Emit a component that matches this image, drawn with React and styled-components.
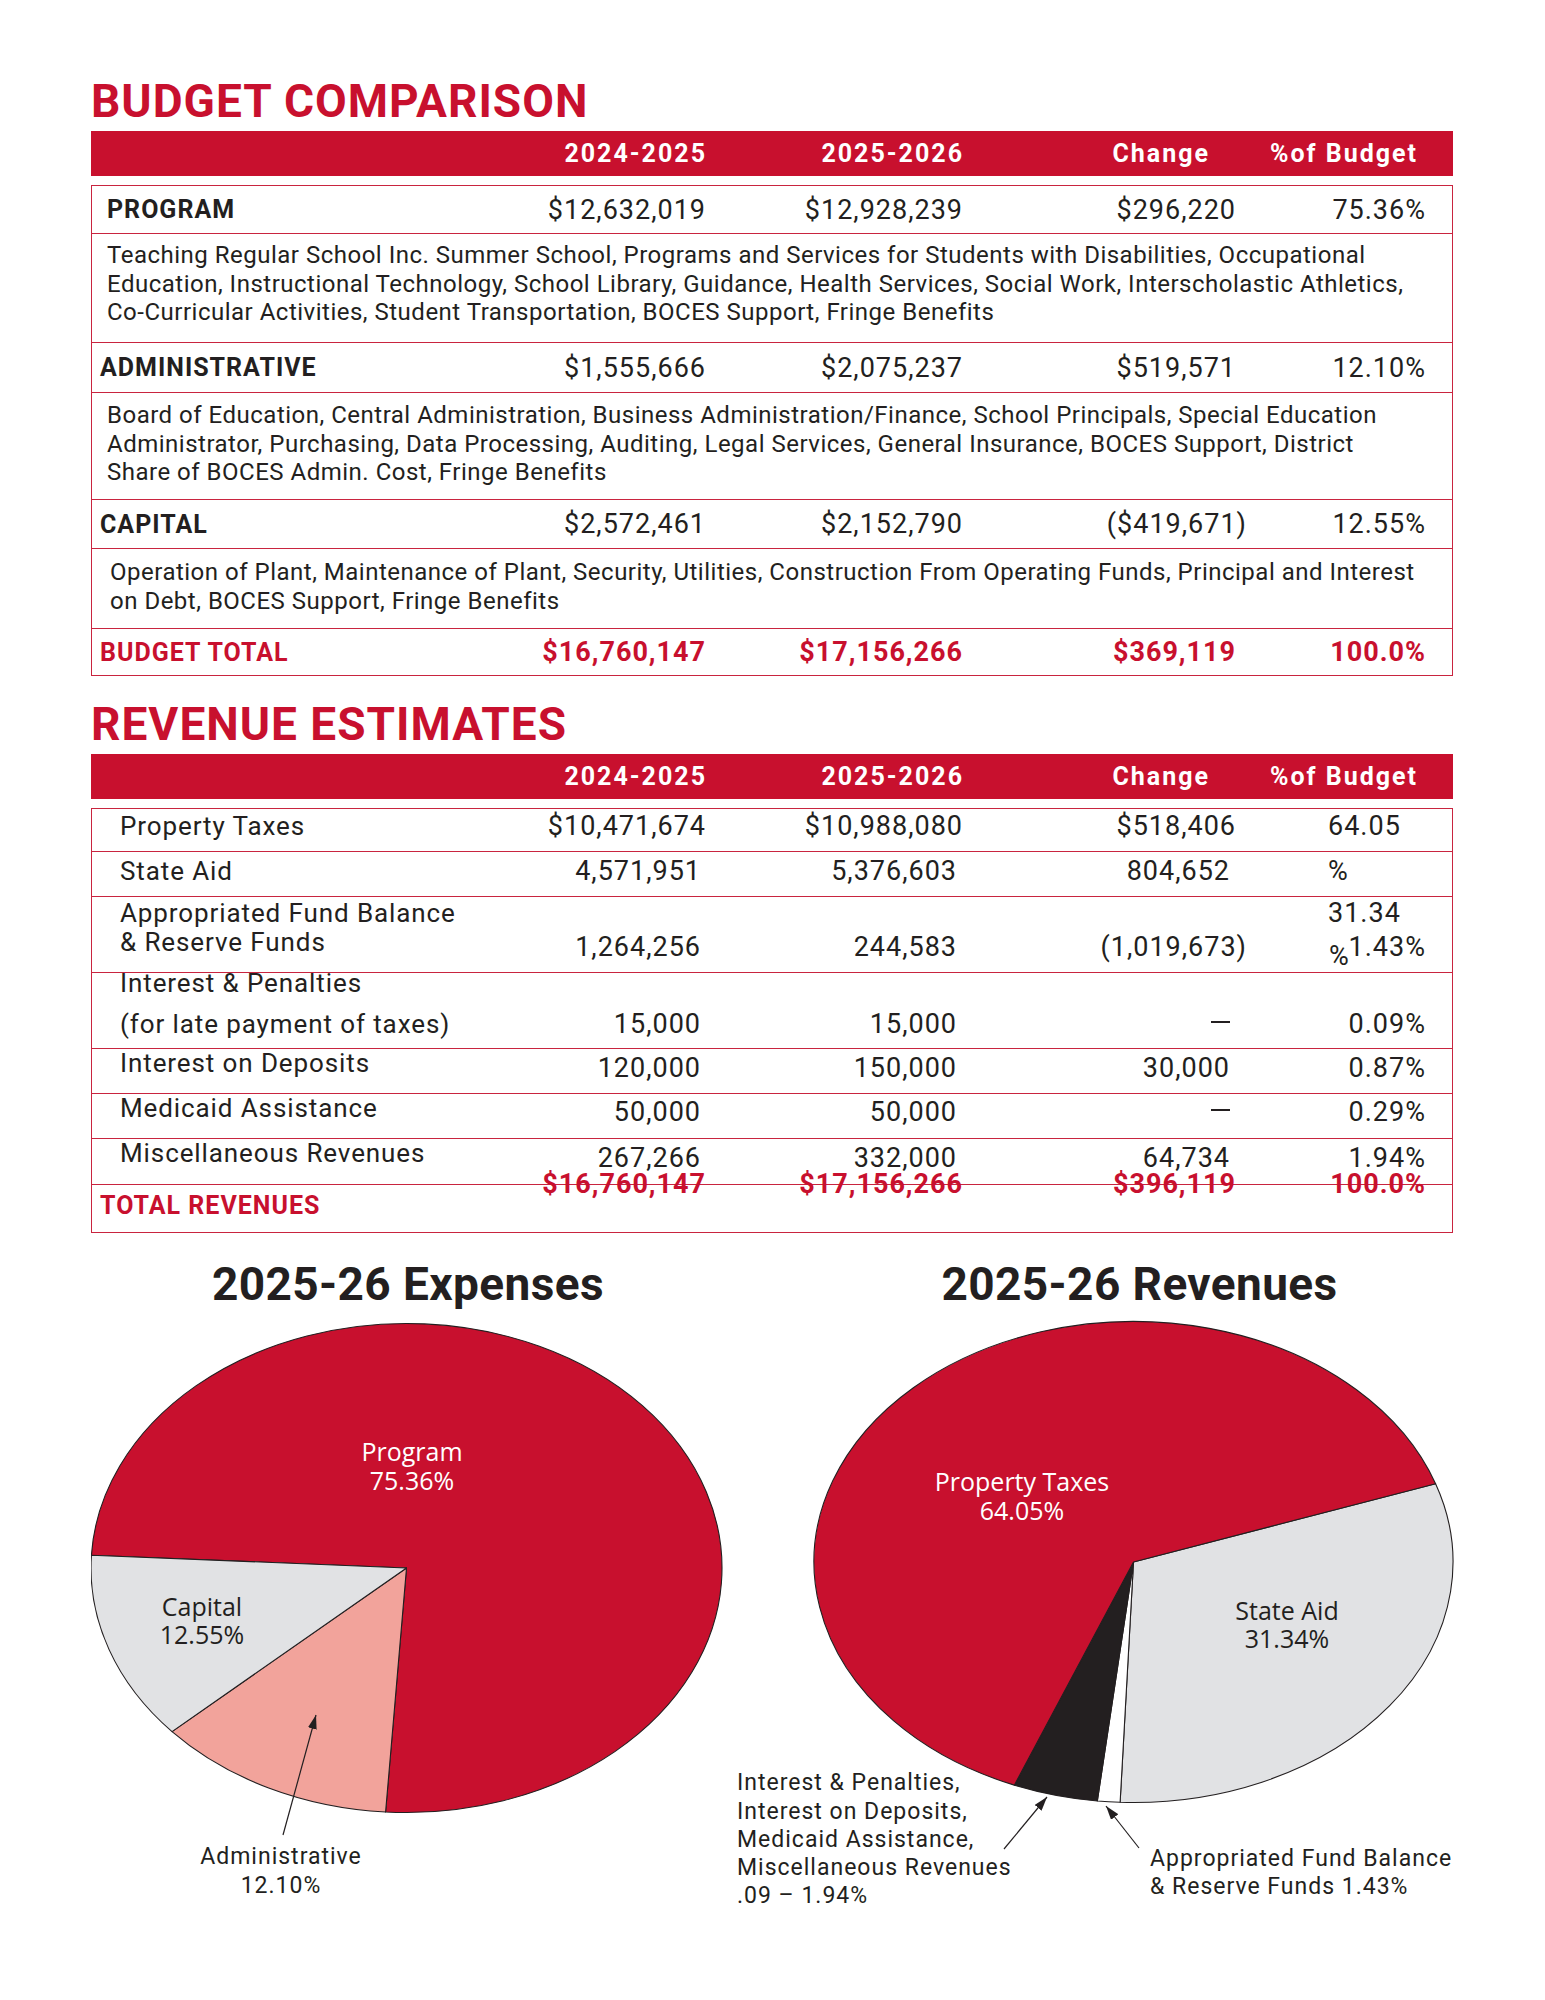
import React from 'react';
import styled, { createGlobalStyle } from 'styled-components';

const RED = '#c8102e';
const INK = '#231f20';
const LINE = '#c9243f';
const GREY = '#e1e2e4';
const SALMON = '#f2a39b';
const COLS = '1fr 200px 257px 273px 190px';

const GlobalStyle = createGlobalStyle`
  body {
    margin: 0;
    background: #fff;
    color: ${INK};
    font-family: Roboto, "Liberation Sans", sans-serif;
  }
`;

const Page = styled.div`
  width: 1362px;
  padding: 79px 0 0 91px;
`;

const SectionTitle = styled.h1`
  margin: ${p => p.$mt || 0}px 0 7px;
  font-size: 46px;
  line-height: 45px;
  font-weight: 700;
  color: ${RED};
  letter-spacing: 1px;
`;

const HeaderBar = styled.div`
  display: grid;
  grid-template-columns: ${COLS};
  align-items: center;
  height: 45px;
  padding-right: 26px;
  background: ${RED};
  color: #fff;
  font-size: 25px;
  font-weight: 700;
  letter-spacing: 2px;
`;

const HeadCell = styled.div`
  text-align: right;
  padding-right: ${p => p.$pr || 0}px;
`;

const Table = styled.div`
  margin-top: 9px;
  border: 1px solid ${LINE};
`;

const Row = styled.div`
  display: grid;
  grid-template-columns: ${COLS};
  align-items: center;
  box-sizing: border-box;
  height: ${p => p.$h}px;
  padding-right: 26px;
  border-bottom: ${p => (p.$last ? 'none' : `1px solid ${LINE}`)};
`;

const Label = styled.div`
  padding-left: ${p => p.$pl}px;
  font-size: 25px;
  font-weight: 700;
  letter-spacing: 1px;
  color: ${p => (p.$red ? RED : INK)};
`;

const Num = styled.div`
  text-align: right;
  font-size: 27px;
  letter-spacing: 1px;
  font-weight: ${p => (p.$total ? 700 : 400)};
  color: ${p => (p.$total ? RED : INK)};
`;

const Hang = styled.span`
  margin-right: -11px;
`;

const Dash = styled.span`
  display: inline-block;
  width: 19px;
  height: 2px;
  margin-bottom: 8px;
  background: ${INK};
  vertical-align: middle;
`;

const Desc = styled.div`
  box-sizing: border-box;
  height: ${p => p.$h}px;
  padding: ${p => p.$pt}px 0 0 ${p => p.$pl}px;
  border-bottom: 1px solid ${LINE};
  font-size: 24px;
  line-height: 28.5px;
  letter-spacing: 0.5px;
  white-space: nowrap;
`;

const DescLine = styled.div``;

/* revenue table */
const RevRow = styled.div`
  display: grid;
  grid-template-columns: ${COLS};
  align-items: start;
  box-sizing: border-box;
  height: ${p => p.$h}px;
  padding-right: 26px;
  border-bottom: ${p => (p.$last ? 'none' : `1px solid ${LINE}`)};
  line-height: 30px;
`;

const RevLabel = styled.div`
  margin-top: ${p => p.$top}px;
  padding-left: ${p => p.$pl}px;
  font-size: ${p => (p.$total ? 25 : 26)}px;
  font-weight: ${p => (p.$total ? 700 : 400)};
  color: ${p => (p.$total ? RED : INK)};
  letter-spacing: ${p => (p.$total ? 1 : 0.9)}px;
  white-space: nowrap;
`;

const RevLine = styled.div`
  margin-top: ${p => p.$gap || 0}px;
`;

const RevNum = styled(Num)`
  margin-top: ${p => p.$top}px;
  padding-right: ${p => p.$pr || 0}px;
`;

const PctCell = styled.div`
  margin-top: ${p => p.$top}px;
  font-size: 27px;
  letter-spacing: 1px;
  line-height: ${p => p.$lh || 30}px;
  text-align: ${p => p.$align || 'right'};
  padding-left: ${p => (p.$align === 'left' ? 92 : 0)}px;
`;

const PctLine = styled.div`
  position: relative;
  text-align: ${p => p.$align || 'right'};
  padding-left: ${p => p.$pl || 0}px;
`;

const StrayPct = styled.span`
  position: absolute;
  left: 93px;
  top: 9px;
`;

/* charts */
const ChartRow = styled.div`
  display: grid;
  grid-template-columns: 640px 729px;
  margin-top: 28px;
`;

const ChartBlock = styled.div`
  display: flex;
  flex-direction: column;
`;

const ChartTitle = styled.h2`
  margin: 0 0 5px;
  padding-left: ${p => p.$pl || 0}px;
  padding-right: ${p => p.$pr || 0}px;
  text-align: center;
  font-size: 46px;
  line-height: 46px;
  font-weight: 700;
  letter-spacing: 0.4px;
  color: ${INK};
`;

const PieLabel = styled.text`
  font-family: "Open Sans", "Noto Sans", sans-serif;
  font-size: 25px;
  text-anchor: middle;
  fill: ${p => (p.$light ? '#fff' : INK)};
`;

const Note = styled.text`
  font-family: Roboto, "Liberation Sans", sans-serif;
  font-size: 23px;
  letter-spacing: 1px;
  text-anchor: ${p => p.$anchor || 'start'};
  fill: ${INK};
`;

const budget = [
  {
    name: 'PROGRAM', pl: 15, h: 48,
    vals: ['$12,632,019', '$12,928,239', '$296,220', '75.36%'],
    desc: {
      pl: 15, pt: 7, h: 109,
      lines: [
        'Teaching Regular School Inc. Summer School, Programs and Services for Students with Disabilities, Occupational',
        'Education, Instructional Technology, School Library, Guidance, Health Services, Social Work, Interscholastic Athletics,',
        'Co-Curricular Activities, Student Transportation, BOCES Support, Fringe Benefits',
      ],
    },
  },
  {
    name: 'ADMINISTRATIVE', pl: 8, h: 50,
    vals: ['$1,555,666', '$2,075,237', '$519,571', '12.10%'],
    desc: {
      pl: 15, pt: 8, h: 107,
      lines: [
        'Board of Education, Central Administration, Business Administration/Finance, School Principals, Special Education',
        'Administrator, Purchasing, Data Processing, Auditing, Legal Services, General Insurance, BOCES Support, District',
        'Share of BOCES Admin. Cost, Fringe Benefits',
      ],
    },
  },
  {
    name: 'CAPITAL', pl: 8, h: 49,
    vals: ['$2,572,461', '$2,152,790', <>($419,671<Hang>)</Hang></>, '12.55%'],
    desc: {
      pl: 18, pt: 9, h: 80,
      lines: [
        'Operation of Plant, Maintenance of Plant, Security, Utilities, Construction From Operating Funds, Principal and Interest',
        'on Debt, BOCES Support, Fringe Benefits',
      ],
    },
  },
];

const revenue = [
  { h: 43, label: ['Property Taxes'], lt: 2, vt: 2, vals: [['$10,471,674', 0], ['$10,988,080', 0], ['$518,406', 0]],
    pct: <PctCell $top={2} $align="left">64.05</PctCell> },
  { h: 45, label: ['State Aid'], lt: 4, vt: 4, vals: [['4,571,951', 5], ['5,376,603', 6], ['804,652', 6]],
    pct: <PctCell $top={4} $align="left">%</PctCell> },
  { h: 76, label: ['Appropriated Fund Balance', '& Reserve Funds'], lt: 1, gap: -1, vt: 35,
    vals: [['1,264,256', 5], ['244,583', 6], [<>(1,019,673<Hang>)</Hang></>, 0]],
    pct: (
      <PctCell $top={-1} $lh={34}>
        <PctLine $align="left" $pl={92}>31.34</PctLine>
        <PctLine>1.43%<StrayPct>%</StrayPct></PctLine>
      </PctCell>
    ) },
  { h: 76, label: ['Interest & Penalties', '(for late payment of taxes)'], lt: -5, gap: 11, vt: 36,
    vals: [['15,000', 5], ['15,000', 6], [<Dash />, 6]], pct: '0.09%' },
  { h: 45, label: ['Interest on Deposits'], lt: -1, vt: 4, vals: [['120,000', 5], ['150,000', 6], ['30,000', 6]], pct: '0.87%' },
  { h: 45, label: ['Medicaid Assistance'], lt: -1, vt: 3, vals: [['50,000', 5], ['50,000', 6], [<Dash />, 6]], pct: '0.29%' },
  { h: 46, label: ['Miscellaneous Revenues'], lt: -1, vt: 4, vals: [['267,266', 5], ['332,000', 6], ['64,734', 6]], pct: '1.94%' },
];

const ptOn = (e, a) => {
  const r = (a * Math.PI) / 180;
  return [e.cx + e.rx * Math.cos(r), e.cy + e.ry * Math.sin(r)];
};

const slicePath = (e, a0, a1) => {
  const [x0, y0] = ptOn(e, a0);
  const [x1, y1] = ptOn(e, a1);
  const large = a1 - a0 > 180 ? 1 : 0;
  return `M${e.cx} ${e.cy} L${x0} ${y0} A${e.rx} ${e.ry} 0 ${large} 1 ${x1} ${y1} Z`;
};

const expenses = {
  id: 'exp',
  box: [91, 1310, 640, 600],
  pie: { cx: 406.5, cy: 1566, rx: 315.5, ry: 244.5 },
  slices: [
    { a0: 183, a1: 453.8, fill: RED },
    { a0: 93.8, a1: 138, fill: SALMON },
    { a0: 138, a1: 183, fill: GREY },
  ],
  labels: [
    { x: 412, y: 1459, t: 'Program', light: true },
    { x: 412, y: 1488, t: '75.36%', light: true },
    { x: 202, y: 1614, t: 'Capital' },
    { x: 202, y: 1642, t: '12.55%' },
  ],
  notes: [
    { x: 281, y: 1862, t: 'Administrative', anchor: 'middle' },
    { x: 281, y: 1891, t: '12.10%', anchor: 'middle' },
  ],
  arrows: [[283, 1833, 316, 1713]],
};

const revenues = {
  id: 'rev',
  box: [731, 1310, 729, 600],
  pie: { cx: 1133.5, cy: 1560, rx: 319.5, ry: 240.5 },
  slices: [
    { a0: 341, a1: 452.4, fill: GREY },
    { a0: 92.4, a1: 96.5, fill: '#fff' },
    { a0: 96.5, a1: 111.9, fill: INK },
    { a0: 111.9, a1: 341, fill: RED },
  ],
  labels: [
    { x: 1022, y: 1489, t: 'Property Taxes', light: true },
    { x: 1022, y: 1518, t: '64.05%', light: true },
    { x: 1287, y: 1618, t: 'State Aid' },
    { x: 1287, y: 1646, t: '31.34%' },
  ],
  notes: [
    { x: 737, y: 1788, t: 'Interest & Penalties,' },
    { x: 737, y: 1817, t: 'Interest on Deposits,' },
    { x: 737, y: 1845, t: 'Medicaid Assistance,' },
    { x: 737, y: 1873, t: 'Miscellaneous Revenues' },
    { x: 737, y: 1901, t: '.09 – 1.94%' },
    { x: 1150, y: 1864, t: 'Appropriated Fund Balance' },
    { x: 1150, y: 1892, t: '& Reserve Funds 1.43%' },
  ],
  arrows: [[1004, 1847, 1047, 1795], [1139, 1846, 1106, 1804]],
};

const PieChart = ({ data }) => {
  const [x, y, w, h] = data.box;
  return (
    <svg width={w} height={h} viewBox={`${x} ${y} ${w} ${h}`}>
      <defs>
        <marker id={`${data.id}-head`} viewBox="0 0 14 9" markerWidth="14" markerHeight="9"
          markerUnits="userSpaceOnUse" refX="14" refY="4.5" orient="auto">
          <path d="M0 0 L14 4.5 L0 9 Z" fill={INK} />
        </marker>
      </defs>
      {data.slices.map((s, i) => (
        <path key={i} d={slicePath(data.pie, s.a0, s.a1)} fill={s.fill} stroke={INK} strokeWidth="1.1" strokeLinejoin="round" />
      ))}
      {data.labels.map((l, i) => (
        <PieLabel key={i} x={l.x} y={l.y} $light={l.light}>{l.t}</PieLabel>
      ))}
      {data.notes.map((n, i) => (
        <Note key={i} x={n.x} y={n.y} $anchor={n.anchor}>{n.t}</Note>
      ))}
      {data.arrows.map(([x1, y1, x2, y2], i) => (
        <line key={i} x1={x1} y1={y1} x2={x2} y2={y2} stroke={INK} strokeWidth="1.2"
          markerEnd={`url(#${data.id}-head)`} />
      ))}
    </svg>
  );
};

const Header = () => (
  <HeaderBar>
    <div />
    <HeadCell>2024-2025</HeadCell>
    <HeadCell>2025-2026</HeadCell>
    <HeadCell $pr={27}>Change</HeadCell>
    <HeadCell $pr={9}>%of Budget</HeadCell>
  </HeaderBar>
);

export default function App() {
  return (
    <>
      <GlobalStyle />
      <Page>
        <SectionTitle>BUDGET COMPARISON</SectionTitle>
        <Header />
        <Table>
          {budget.map(b => (
            <React.Fragment key={b.name}>
              <Row $h={b.h}>
                <Label $pl={b.pl}>{b.name}</Label>
                {b.vals.map((v, i) => <Num key={i}>{v}</Num>)}
              </Row>
              <Desc $h={b.desc.h} $pt={b.desc.pt} $pl={b.desc.pl}>
                {b.desc.lines.map(l => <DescLine key={l}>{l}</DescLine>)}
              </Desc>
            </React.Fragment>
          ))}
          <Row $h={46} $last>
            <Label $pl={8} $red>BUDGET TOTAL</Label>
            <Num $total>$16,760,147</Num>
            <Num $total>$17,156,266</Num>
            <Num $total>$369,119</Num>
            <Num $total>100.0%</Num>
          </Row>
        </Table>

        <SectionTitle $mt={26}>REVENUE ESTIMATES</SectionTitle>
        <Header />
        <Table>
          {revenue.map((r, i) => (
            <RevRow key={i} $h={r.h}>
              <RevLabel $top={r.lt} $pl={28}>
                {r.label.map((l, j) => <RevLine key={l} $gap={j ? r.gap : 0}>{l}</RevLine>)}
              </RevLabel>
              {r.vals.map(([v, pr], j) => (
                <RevNum key={j} $top={r.vt} $pr={pr}>{v}</RevNum>
              ))}
              {typeof r.pct === 'string' ? <PctCell $top={r.vt}>{r.pct}</PctCell> : r.pct}
            </RevRow>
          ))}
          <RevRow $h={47} $last>
            <RevLabel $top={6} $pl={8} $total>TOTAL REVENUES</RevLabel>
            <RevNum $top={-16} $total>$16,760,147</RevNum>
            <RevNum $top={-16} $total>$17,156,266</RevNum>
            <RevNum $top={-16} $total>$396,119</RevNum>
            <RevNum $top={-16} $total>100.0%</RevNum>
          </RevRow>
        </Table>

        <ChartRow>
          <ChartBlock>
            <ChartTitle $pr={6}>2025-26 Expenses</ChartTitle>
            <PieChart data={expenses} />
          </ChartBlock>
          <ChartBlock>
            <ChartTitle $pl={88}>2025-26 Revenues</ChartTitle>
            <PieChart data={revenues} />
          </ChartBlock>
        </ChartRow>
      </Page>
    </>
  );
}
